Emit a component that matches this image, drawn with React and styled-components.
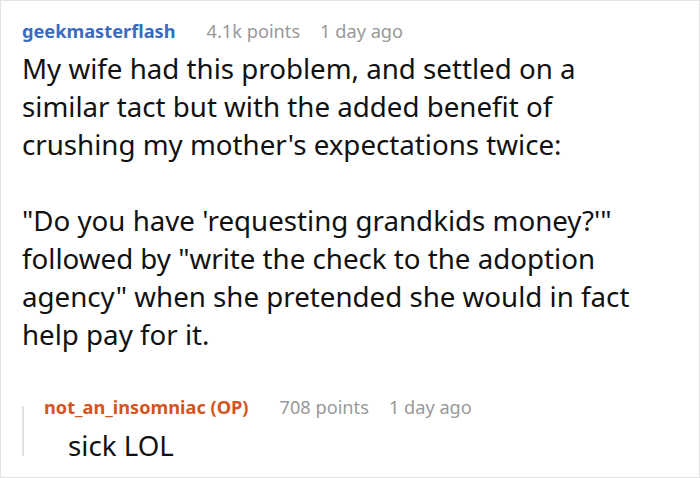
import React from 'react';
import styled, { createGlobalStyle } from 'styled-components';

const GlobalStyle = createGlobalStyle`
  html, body {
    margin: 0;
    padding: 0;
    background: #ffffff;
  }
  body {
    font-family: "Noto Sans", "Open Sans", "DejaVu Sans", sans-serif;
  }
`;

const Card = styled.div`
  box-sizing: border-box;
  width: 700px;
  height: 478px;
  border: 1px solid #e2e2e2;
  background: #fff;
  padding: 17px 20px 0 21px;
  overflow: hidden;
`;

const Meta = styled.div`
  display: flex;
  align-items: baseline;
  gap: 20px;
  font-size: 18.2px;
  line-height: 26px;
`;

const Author = styled.span`
  font-weight: 700;
  margin-right: 11px;
  color: ${p => (p.$op ? '#d4541f' : '#3a6bbf')};
`;

const Info = styled.span`
  color: #999999;
`;

const Body = styled.div`
  font-size: 27.7px;
  line-height: 38px;
  color: #111;
  margin-top: 5px;
  width: 630px;
`;

const Para = styled.p`
  margin: 0 0 38px;
  &:last-child {
    margin-bottom: 0;
  }
`;

const Reply = styled.div`
  position: relative;
  margin-top: 41px;
  padding-left: 22px;
  &::before {
    content: '';
    position: absolute;
    left: 0;
    top: 12px;
    bottom: 8px;
    width: 2px;
    background: #e0e0e0;
  }
`;

const ReplyBody = styled.div`
  font-size: 27.7px;
  line-height: 38px;
  color: #111;
  margin-top: 6px;
  padding-left: 24px;
`;

const Comment = ({ author, points, time, op, children }) => (
  <>
    <Meta>
      <Author $op={op}>{author}</Author>
      <Info>{points} points</Info>
      <Info>{time}</Info>
    </Meta>
    {children}
  </>
);

const App = () => (
  <>
    <GlobalStyle />
    <Card>
      <Comment author="geekmasterflash" points="4.1k" time="1 day ago">
        <Body>
          <Para>
            My wife had this problem, and settled on a similar tact but with the added benefit of
            crushing my mother's expectations twice:
          </Para>
          <Para>
            "Do you have 'requesting grandkids money?'" followed by "write the check to the adoption
            agency" when she pretended she would in fact help pay for it.
          </Para>
        </Body>
      </Comment>
      <Reply>
        <Comment author="not_an_insomniac (OP)" points="708" time="1 day ago" op>
          <ReplyBody>sick LOL</ReplyBody>
        </Comment>
      </Reply>
    </Card>
  </>
);

export default App;
